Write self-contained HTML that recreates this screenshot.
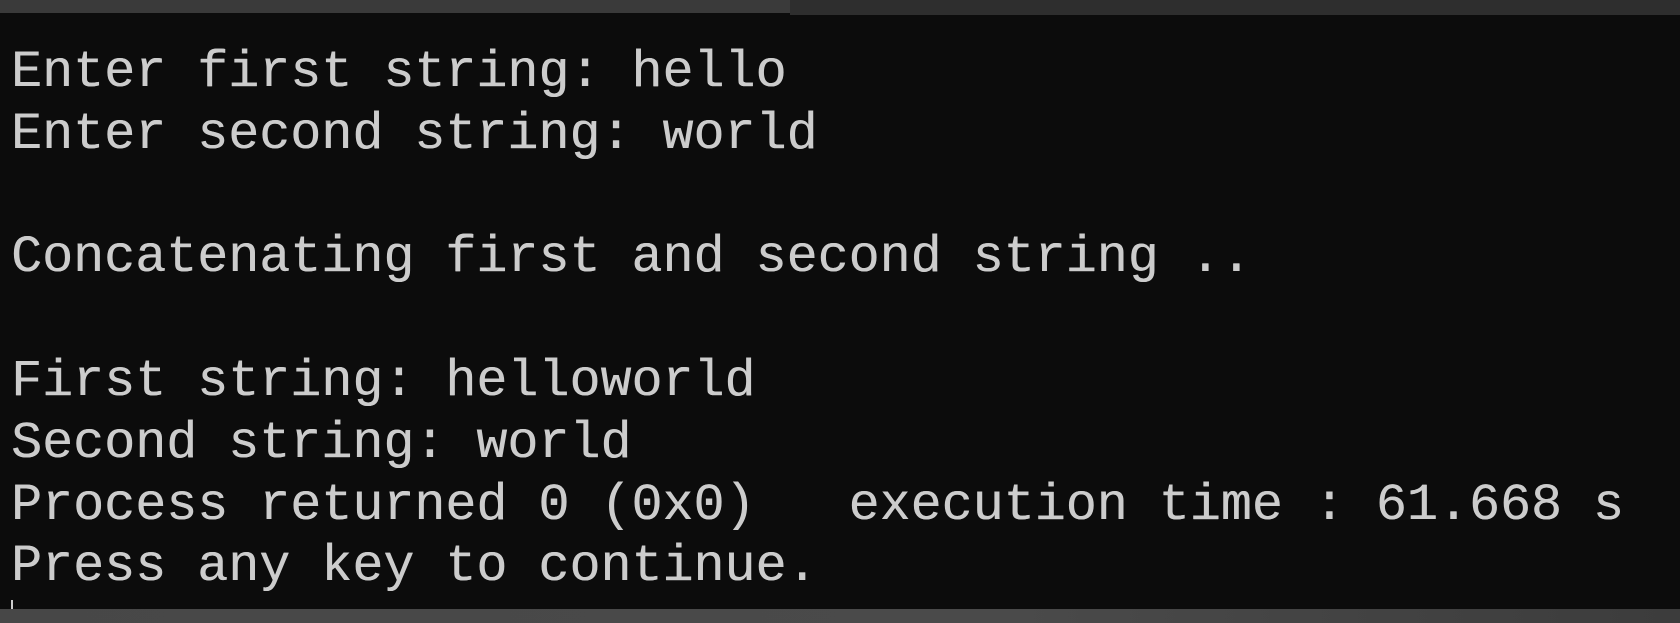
<!DOCTYPE html>
<html><head><meta charset="utf-8"><style>
html,body{margin:0;padding:0;width:1680px;height:623px;overflow:hidden;background:#0c0c0c}
.top{position:absolute;left:0;top:0;width:1680px;height:13px;background:#3a3a3a}
.top2{position:absolute;left:790px;top:0;width:890px;height:15px;background:#2e2e2e}
.bot{position:absolute;left:0;top:609px;width:1680px;height:14px;background:linear-gradient(90deg,#474747,#4a4a4a 60%,#3c3c3c)}
pre{position:absolute;left:11px;top:42px;margin:0;font-family:"Liberation Mono",monospace;font-size:51.7px;line-height:61.8px;color:#cccccc;text-shadow:0.4px 0 0 #cccccc}
.cur{position:absolute;left:11px;top:600px;width:2px;height:9px;background:#cccccc}
</style></head><body>
<div class="top"></div><div class="top2"></div>
<pre>Enter first string: hello
Enter second string: world

Concatenating first and second string ..

First string: helloworld
Second string: world
Process returned 0 (0x0)   execution time : 61.668 s
Press any key to continue.</pre>
<div class="cur"></div>
<div class="bot"></div>
</body></html>
